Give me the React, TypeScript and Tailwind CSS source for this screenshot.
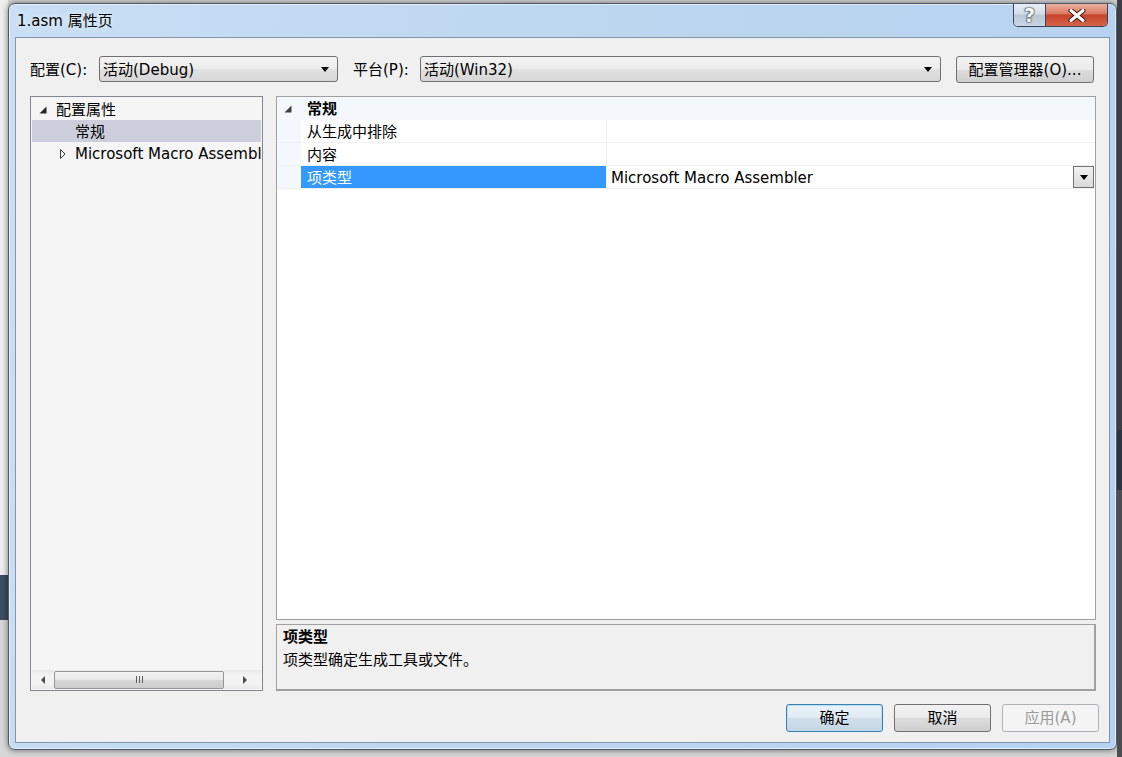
import React from 'react';

function DownArrow() {
  return <div className="h-0 w-0 border-x-[4px] border-t-[5px] border-x-transparent border-t-black" />;
}

function Combo({ text, className }: { text: string; className: string }) {
  return (
    <div
      className={`flex h-[26px] items-center justify-between rounded-[3px] border border-[#707070] bg-[linear-gradient(to_bottom,#f3f3f3_0%,#ececec_50%,#e1e1e1_50%,#d7d7d7_100%)] pl-[3px] pr-[8px] ${className}`}
    >
      <span className="pt-[2px] leading-none">{text}</span>
      <DownArrow />
    </div>
  );
}

function Button({ label, kind, className }: { label: string; kind?: 'default' | 'disabled'; className: string }) {
  let look =
    'border-[#707070] bg-[linear-gradient(to_bottom,#f2f2f2_0%,#ebebeb_50%,#dddddd_50%,#cfcfcf_100%)] text-black';
  if (kind === 'default')
    look =
      'border-[#3c7fb1] bg-[linear-gradient(to_bottom,#eaf3fa_0%,#dfeaf3_50%,#d0dfea_50%,#c5d7e4_100%)] text-black shadow-[inset_0_0_0_1px_#b9dcf3]';
  if (kind === 'disabled') look = 'border-[#adb2b5] bg-[#f4f4f4] text-[#9a9a9a]';
  return (
    <div className={`flex items-center justify-center rounded-[3px] border pt-[1px] leading-none ${look} ${className}`}>
      {label}
    </div>
  );
}

function Expanded({ color }: { color: string }) {
  return (
    <svg width="8" height="8" viewBox="0 0 8 8">
      <polygon points="7.5,0.5 7.5,7.5 0.5,7.5" fill={color} />
    </svg>
  );
}

function Collapsed() {
  return (
    <svg width="6" height="10" viewBox="0 0 6 10">
      <polygon points="0.5,0.5 5,5 0.5,9.5" fill="none" stroke="#3a3a3a" strokeWidth="1" />
    </svg>
  );
}

function TreePanel() {
  return (
    <div className="ml-[14px] flex w-[233px] flex-col border border-[#828790] bg-[#f5f5f5]">
      <div className="flex-1 pt-[1px]">
        <div className="flex h-[22px] items-center pt-[2px]">
          <div className="ml-[8px] w-[17px] shrink-0">
            <Expanded color="#262626" />
          </div>
          <span className="leading-none">配置属性</span>
        </div>
        <div className="mx-[1px] flex h-[22px] items-center bg-[#cccedb] pl-[43px] pt-[2px]">
          <span className="leading-none">常规</span>
        </div>
        <div className="flex h-[22px] items-center overflow-hidden whitespace-nowrap pt-[2px]">
          <div className="ml-[29px] w-[15px] shrink-0">
            <Collapsed />
          </div>
          <span className="shrink-0 leading-none">Microsoft Macro Assembler</span>
        </div>
      </div>
      <div className="mx-[1px] mb-[1px] flex h-[19px] items-center bg-[linear-gradient(to_bottom,#e9e9e9,#f3f3f3_30%,#f3f3f3_70%,#e9e9e9)]">
        <div className="flex w-[22px] justify-center">
          <div className="h-0 w-0 border-y-[4px] border-r-[4px] border-y-transparent border-r-[#4a4a4a]" />
        </div>
        <div className="flex h-[18px] w-[170px] items-center justify-center gap-[2px] rounded-[2px] border border-[#979797] bg-[linear-gradient(to_bottom,#f3f3f3_0%,#e8e8e8_50%,#d6d6d6_50%,#cdcdcd_100%)]">
          <div className="h-[7px] w-[1px] bg-[#5f5f5f]" />
          <div className="h-[7px] w-[1px] bg-[#5f5f5f]" />
          <div className="h-[7px] w-[1px] bg-[#5f5f5f]" />
        </div>
        <div className="flex flex-1 justify-center pl-[4px]">
          <div className="h-0 w-0 border-y-[4px] border-l-[4px] border-y-transparent border-l-[#4a4a4a]" />
        </div>
      </div>
    </div>
  );
}

function PropRow({ name, value, selected }: { name: string; value?: string; selected?: boolean }) {
  return (
    <div className="flex h-[23px] border-b border-[#f0f0f0]">
      <div className="w-[24px] bg-[#f4f7fc]" />
      <div
        className={`flex w-[306px] items-center border-r border-[#f0f0f0] pl-[6px] pt-[3px] ${selected ? 'bg-[#3399ff] text-white' : 'bg-white'}`}
      >
        <span className="leading-none">{name}</span>
      </div>
      <div className="flex flex-1 items-center justify-between bg-white pl-[4px]">
        <span className="pt-[3px] leading-none">{value}</span>
        {selected && (
          <div className="mr-[1px] flex h-[22px] w-[21px] items-center justify-center border border-[#707070] bg-[linear-gradient(to_bottom,#f2f2f2,#d9d9d9)]">
            <DownArrow />
          </div>
        )}
      </div>
    </div>
  );
}

function GridPanel() {
  return (
    <div className="flex h-[524px] flex-col border border-[#a0a0a0] bg-white">
      <div className="flex h-[23px] items-center bg-[#f4f7fc] pt-[1px]">
        <div className="w-[24px] pl-[7px]">
          <Expanded color="#404040" />
        </div>
        <span className="pl-[6px] font-bold leading-none">常规</span>
      </div>
      <PropRow name="从生成中排除" />
      <PropRow name="内容" />
      <PropRow name="项类型" value="Microsoft Macro Assembler" selected />
    </div>
  );
}

function CaptionButtons() {
  return (
    <div className="mr-[8px] flex h-[23px] overflow-hidden rounded-b-[5px] border border-t-0 border-[#3a4452]">
      <div className="flex w-[32px] items-center justify-center border-r border-[#3a4452] bg-[linear-gradient(to_bottom,#e6eef6_0%,#d2dde8_45%,#b9c8d6_50%,#c9d6e3_100%)]">
        <span className="text-[19px] font-bold leading-none text-white [text-shadow:0_0_1px_#1c2733,0_0_1px_#1c2733,0_0_2px_#1c2733]">?</span>
      </div>
      <div className="flex w-[61px] items-center justify-center bg-[linear-gradient(to_bottom,#ebb1a3_0%,#d97a62_45%,#c5432a_50%,#d5654a_100%)]">
        <svg width="18" height="13" viewBox="0 0 18 13">
          <path d="M3 1.5 L15 11.5 M15 1.5 L3 11.5" stroke="#3a1a14" strokeWidth="5" strokeLinecap="round" />
          <path d="M3 1.5 L15 11.5 M15 1.5 L3 11.5" stroke="#ffffff" strokeWidth="3" strokeLinecap="round" />
        </svg>
      </div>
    </div>
  );
}

export default function App() {
  return (
    <div className="flex h-[757px] w-[1122px] overflow-hidden bg-[#d6d6d6] font-['DejaVu_Sans','Noto_Sans_CJK_SC',sans-serif] text-[15px] text-black">
      {/* desktop behind the dialog, left side */}
      <div className="flex w-[8px] flex-col">
        <div className="h-[575px] bg-[#efefef]" />
        <div className="h-[45px] bg-[#3e4d63]" />
        <div className="flex-1 bg-[#d8d8d8]" />
      </div>

      {/* dialog window */}
      <div className="mt-[3px] flex h-[747px] w-[1109px] flex-col rounded-[7px] border border-[#4f5a66] bg-[linear-gradient(100deg,#c8def4_0%,#bcd6f0_50%,#b6d2ef_100%)] shadow-[inset_0_0_0_1px_rgba(255,255,255,0.55),0_0_6px_rgba(0,0,0,0.55)]">
        <div className="flex h-[33px] items-start justify-between">
          <span className="pl-[8px] pt-[7px] leading-[20px] [text-shadow:0_0_6px_#ffffff]">1.asm 属性页</span>
          <CaptionButtons />
        </div>

        <div className="mx-[6px] mb-[6px] flex flex-1 flex-col border border-[#8195ac] bg-[#f0f0f0]">
          {/* config / platform row */}
          <div className="mt-[18px] flex items-start pl-[14px]">
            <div className="flex h-[26px] w-[69px] items-center pt-[2px]">
              <span className="leading-none">配置(C):</span>
            </div>
            <Combo text="活动(Debug)" className="w-[239px]" />
            <div className="ml-[15px] flex h-[26px] w-[67px] items-center pt-[2px]">
              <span className="leading-none">平台(P):</span>
            </div>
            <Combo text="活动(Win32)" className="w-[521px]" />
            <Button label="配置管理器(O)..." className="ml-[15px] h-[27px] w-[138px]" />
          </div>

          {/* tree + grid */}
          <div className="mt-[13px] flex h-[595px]">
            <TreePanel />
            <div className="ml-[13px] flex w-[820px] flex-col gap-[4px]">
              <GridPanel />
              <div className="flex h-[67px] flex-col border border-b-2 border-r-2 border-[#a0a0a0] bg-[#f0f0f0] pl-[6px]">
                <div className="flex h-[22px] items-center pt-[2px]">
                  <span className="font-bold leading-none">项类型</span>
                </div>
                <div className="flex h-[24px] items-center pt-[2px]">
                  <span className="leading-none">项类型确定生成工具或文件。</span>
                </div>
              </div>
            </div>
          </div>

          {/* dialog buttons */}
          <div className="mt-[13px] flex justify-end gap-[11px] pr-[10px]">
            <Button label="确定" kind="default" className="h-[28px] w-[97px]" />
            <Button label="取消" className="h-[28px] w-[97px]" />
            <Button label="应用(A)" kind="disabled" className="h-[28px] w-[97px]" />
          </div>
        </div>
      </div>

      {/* desktop behind the dialog, right side */}
      <div className="flex flex-1 flex-col">
        <div className="h-[430px] bg-[#3b3f45]" />
        <div className="h-[60px] bg-[#2c3440]" />
        <div className="flex-1 bg-[#4a4d52]" />
      </div>
    </div>
  );
}
